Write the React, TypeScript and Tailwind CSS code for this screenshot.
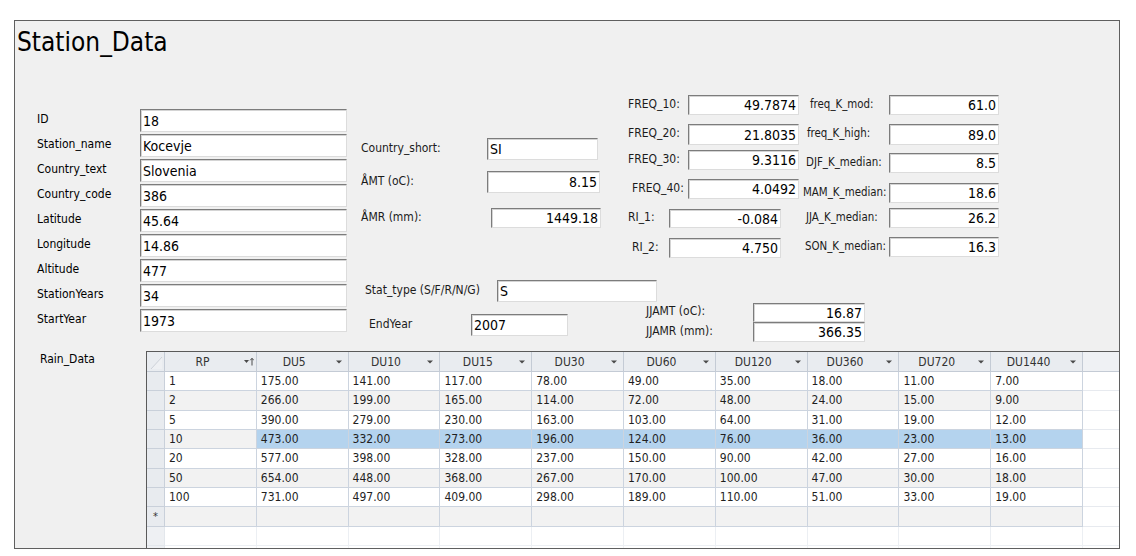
import type React from 'react';

type FieldProps = {
	label: string;
	value: string;
	wrap?: string;
	lw: string;
	bw: string;
	bh: string;
	right?: boolean;
	bold?: boolean;
	small?: boolean;
};

// sunken Access-style text box with its caption on the left
const Field: React.FC<FieldProps> = ({ label, value, wrap = '', lw, bw, bh, right, bold, small }) => (
	<div className={`flex items-center ${wrap}`}>
		<span
			className={`${lw} shrink-0 mb-[3px] leading-[14px] whitespace-nowrap ${small ? 'text-[11.4px]' : 'text-[12px]'} ${bold ? 'text-black' : 'text-[#1b1b1b]'}`}
		>
			{label}
		</span>
		<div
			className={`${bw} ${bh} shrink-0 flex items-center px-[2px] bg-white border border-t-[#7c7c7c] border-l-[#7c7c7c] border-r-[#dcdcdc] border-b-[#dcdcdc] shadow-[inset_1px_1px_0_#d4d4d4] text-[14px] leading-none text-black ${right ? 'justify-end' : ''}`}
		>
			{value}
		</div>
	</div>
);

const leftFields = [
	['ID', '18'],
	['Station_name', 'Kocevje'],
	['Country_text', 'Slovenia'],
	['Country_code', '386'],
	['Latitude', '45.64'],
	['Longitude', '14.86'],
	['Altitude', '477'],
	['StationYears', '34'],
	['StartYear', '1973'],
];

const columns = ['RP', 'DU5', 'DU10', 'DU15', 'DU30', 'DU60', 'DU120', 'DU360', 'DU720', 'DU1440'];

const rows = [
	['1', '175.00', '141.00', '117.00', '78.00', '49.00', '35.00', '18.00', '11.00', '7.00'],
	['2', '266.00', '199.00', '165.00', '114.00', '72.00', '48.00', '24.00', '15.00', '9.00'],
	['5', '390.00', '279.00', '230.00', '163.00', '103.00', '64.00', '31.00', '19.00', '12.00'],
	['10', '473.00', '332.00', '273.00', '196.00', '124.00', '76.00', '36.00', '23.00', '13.00'],
	['20', '577.00', '398.00', '328.00', '237.00', '150.00', '90.00', '42.00', '27.00', '16.00'],
	['50', '654.00', '448.00', '368.00', '267.00', '170.00', '100.00', '47.00', '30.00', '18.00'],
	['100', '731.00', '497.00', '409.00', '298.00', '189.00', '110.00', '51.00', '33.00', '19.00'],
];

const SELECTED = 3;

const DropArrow = () => (
	<svg width="6" height="4" viewBox="0 0 6 4" className="block">
		<path d="M0 0.5h6L3 3.5z" fill="#4a4a4a" />
	</svg>
);

const SortArrow = () => (
	<svg width="10" height="9" viewBox="0 0 10 9" className="block">
		<path d="M0 3h5L2.5 6z" fill="#4a4a4a" />
		<path d="M8 1.5v7" stroke="#4a4a4a" strokeWidth="1" />
		<path d="M6.2 3.3L8 1.3l1.8 2" stroke="#4a4a4a" strokeWidth="1" fill="none" />
	</svg>
);

const Datasheet = () => (
	<div className="flex-1 flex flex-col bg-white border-l border-t border-[#5a5a5a] overflow-hidden text-[12px] leading-none text-[#1f1f1f]">
		{/* header */}
		<div className="flex h-[20px] shrink-0 bg-[#e9ecf0] border-b border-[#c4cbd5]">
			<div className="w-[18px] shrink-0 border-r border-[#c4cbd5] flex items-end justify-end">
				<svg width="16" height="17" viewBox="0 0 16 17" className="block">
					<path d="M3 15L14 3v12z" fill="#eef0f3" />
					<path d="M3 15L14 3" stroke="#cdd2d9" strokeWidth="1" />
				</svg>
			</div>
			{columns.map((c, i) => (
				<div key={c} className="w-[91.8px] shrink-0 border-r border-[#c4cbd5] flex items-center">
					<span className="flex-1 text-center text-[#333]">{c}</span>
					<span className="w-[16px] shrink-0 flex items-center pl-[4px]">
						{i === 0 ? <SortArrow /> : <DropArrow />}
					</span>
				</div>
			))}
			<div className="flex-1 bg-[#eff1f4]" />
		</div>
		{/* records */}
		{rows.map((r, ri) => {
			const odd = ri % 2 === 1;
			return (
				<div key={r[0]} className="flex h-[19.33px] shrink-0">
					<div className="w-[18px] shrink-0 bg-[#e8ebef] border-r border-b border-[#c9d0da]" />
					{r.map((v, ci) => {
						const sel = ri === SELECTED && ci > 0;
						return (
							<div
								key={ci}
								className={`w-[91.8px] shrink-0 border-r border-b border-[#ccd4df] flex items-center pl-[4px] ${sel ? 'bg-[#b4d3ee]' : odd ? 'bg-[#f2f2f2]' : 'bg-white'}`}
							>
								{v}
							</div>
						);
					})}
					<div className="flex-1 border-b border-[#e7eaef]" />
				</div>
			);
		})}
		{/* new record row */}
		<div className="flex h-[19.33px] shrink-0">
			<div className="w-[18px] shrink-0 bg-[#e8ebef] border-r border-b border-[#c9d0da] flex items-center justify-center text-[11px] text-[#333]">
				*
			</div>
			{columns.map((c) => (
				<div key={c} className="w-[91.8px] shrink-0 bg-[#f2f2f2] border-r border-b border-[#ccd4df]" />
			))}
			<div className="flex-1 border-b border-[#e7eaef]" />
		</div>
		{/* empty area */}
		<div className="flex h-[19.33px] shrink-0">
			<div className="w-[18px] shrink-0 bg-[#eef0f3] border-r border-b border-[#e3e7ec]" />
			{columns.map((c) => (
				<div key={c} className="w-[91.8px] shrink-0 border-r border-b border-[#eceff3]" />
			))}
			<div className="flex-1 border-b border-[#eceff3]" />
		</div>
		<div className="flex flex-1">
			<div className="w-[18px] shrink-0 bg-[#eef0f3] border-r border-[#e3e7ec]" />
			{columns.map((c) => (
				<div key={c} className="w-[91.8px] shrink-0 border-r border-[#f0f2f5]" />
			))}
		</div>
	</div>
);

const App: React.FC = () => {
	return (
		<div className="min-h-screen bg-white pt-[20px] pl-[14px] font-['DejaVu_Sans_Condensed','DejaVu_Sans',sans-serif]">
			<div className="w-[1106px] h-[529px] flex flex-col border border-[#5f5f5f] bg-[#f0f0f0]">
				{/* title */}
				<div className="h-[74px] shrink-0 pl-[2px] pt-[8px]">
					<h1 className="text-[26px] leading-none text-black">Station_Data</h1>
				</div>

				{/* fields */}
				<div className="flex h-[256px] shrink-0">
					<div className="ml-[22px] mt-[14px] flex flex-col gap-[2px]">
						{leftFields.map(([l, v]) => (
							<Field key={l} label={l} value={v} lw="w-[103px]" bw="w-[207px]" bh="h-[23px]" bold />
						))}
					</div>

					<div className="ml-[14px] flex flex-col">
						<div className="flex items-start">
							<div className="w-[267px] shrink-0 mt-[43px] flex flex-col">
								<Field label="Country_short:" value="SI" lw="w-[126px]" bw="w-[111px]" bh="h-[22px]" />
								<Field label="ÅMT (oC):" value="8.15" wrap="mt-[11px]" lw="w-[126px]" bw="w-[113px]" bh="h-[22px]" right />
								<Field label="ÅMR (mm):" value="1449.18" wrap="mt-[15px]" lw="w-[130px]" bw="w-[110px]" bh="h-[20px]" right />
							</div>

							<div className="w-[175px] shrink-0 flex flex-col">
								<Field label="FREQ_10:" value="49.7874" lw="w-[60px]" bw="w-[111px]" bh="h-[20px]" right />
								<Field label="FREQ_20:" value="21.8035" wrap="mt-[9px]" lw="w-[60px]" bw="w-[111px]" bh="h-[21px]" right />
								<Field label="FREQ_30:" value="9.3116" wrap="mt-[5px]" lw="w-[60px]" bw="w-[111px]" bh="h-[20px]" right />
								<Field label="FREQ_40:" value="4.0492" wrap="mt-[9px] ml-[4px]" lw="w-[56px]" bw="w-[111px]" bh="h-[20px]" right />
								<Field label="RI_1:" value="-0.084" wrap="mt-[10px]" lw="w-[41px]" bw="w-[112px]" bh="h-[19px]" right />
								<Field label="RI_2:" value="4.750" wrap="mt-[10px] ml-[4px]" lw="w-[37px]" bw="w-[112px]" bh="h-[20px]" right />
							</div>

							<div className="flex flex-col">
								<Field label="freq_K_mod:" value="61.0" wrap="ml-[7px]" lw="w-[79px]" bw="w-[110px]" bh="h-[20px]" right small />
								<Field label="freq_K_high:" value="89.0" wrap="mt-[9px] ml-[4px]" lw="w-[82px]" bw="w-[110px]" bh="h-[21px]" right small />
								<Field label="DJF_K_median:" value="8.5" wrap="mt-[8px] ml-[3px]" lw="w-[83px]" bw="w-[110px]" bh="h-[20px]" right small />
								<Field label="MAM_K_median:" value="18.6" wrap="mt-[10px]" lw="w-[86px]" bw="w-[110px]" bh="h-[20px]" right small />
								<Field label="JJA_K_median:" value="26.2" wrap="mt-[5px] ml-[3px]" lw="w-[83px]" bw="w-[110px]" bh="h-[20px]" right small />
								<Field label="SON_K_median:" value="16.3" wrap="mt-[9px] ml-[2px]" lw="w-[84px]" bw="w-[110px]" bh="h-[20px]" right small />
							</div>
						</div>

						<Field label="Stat_type (S/F/R/N/G)" value="S" wrap="mt-[22px] ml-[4px]" lw="w-[132px]" bw="w-[160px]" bh="h-[22px]" />

						<div className="flex items-start">
							<Field label="EndYear" value="2007" wrap="mt-[12px] ml-[8px]" lw="w-[102px]" bw="w-[97px]" bh="h-[22px]" />
							<div className="ml-[78px] mt-[1px] flex flex-col">
								<Field label="JJAMT (oC):" value="16.87" lw="w-[107px]" bw="w-[112px]" bh="h-[19px]" right />
								<Field label="JJAMR (mm):" value="366.35" lw="w-[107px]" bw="w-[112px]" bh="h-[20px]" right />
							</div>
						</div>
					</div>
				</div>

				{/* subform */}
				<div className="flex flex-1">
					<div className="w-[131px] shrink-0 pl-[25px] pt-[1px] text-[12px] leading-[14px] text-black">
						Rain_Data
					</div>
					<Datasheet />
				</div>
			</div>
		</div>
	);
};

export default App;
